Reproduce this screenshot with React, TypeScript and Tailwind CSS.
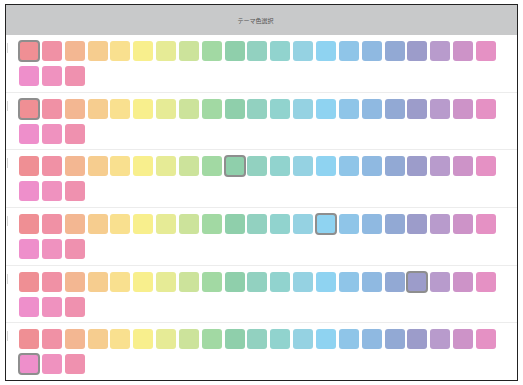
const COLORS = [
  "#ef8f94", "#f091a5", "#f3b792", "#f6cd8f", "#f9e08f", "#f8ef8d",
  "#e6eb96", "#cce39b", "#a2d9a3", "#8fcfab", "#92d1c0", "#91d3ce",
  "#95d2e2", "#8fd3f1", "#8fc5e8", "#8fb9e1", "#92a9d4", "#9c9cca",
  "#b89bcc", "#cd93c8", "#e591c4", "#ee8fcb", "#ef92bf", "#ef91af",
];

const SELECTED = [0, 0, 9, 13, 17, 21];

function Swatches({ selected }: { selected: number }) {
  return (
    <div className="flex w-[484px] flex-wrap gap-x-[2.85px] gap-y-[5px]">
      {COLORS.map((c, i) => (
        <div
          key={i}
          className={
            i === selected
              ? "h-[20px] w-[20px] rounded-[3px] outline-2 -outline-offset-1 outline-[#8e8e8e]"
              : "h-[20px] w-[20px] rounded-[3px]"
          }
          style={{ backgroundColor: c }}
        />
      ))}
    </div>
  );
}

export default function App() {
  return (
    <div className="h-[385px] w-[523px] bg-white pl-[5px] pt-[4px]">
      <div className="flex h-[377px] w-[513px] flex-col border border-[#222]">
        <div className="flex h-[30px] shrink-0 items-center justify-center bg-[#c8c9ca] pr-[12px]">
          <span className="font-['Noto_Sans_CJK_JP',sans-serif] text-[6px] text-[#555]">
            テーマ色選択
          </span>
        </div>

        {SELECTED.map((sel, i) => (
          <div
            key={i}
            className={
              i < SELECTED.length - 1
                ? "relative flex-1 border-b border-[#ececec] pl-[13px] pt-[6px]"
                : "relative flex-1 pl-[13px] pt-[6px]"
            }
          >
            <div className="absolute left-[1px] top-[8px] h-[10px] w-px bg-[#d4d4d4]" />
            <Swatches selected={sel} />
          </div>
        ))}
      </div>
    </div>
  );
}
